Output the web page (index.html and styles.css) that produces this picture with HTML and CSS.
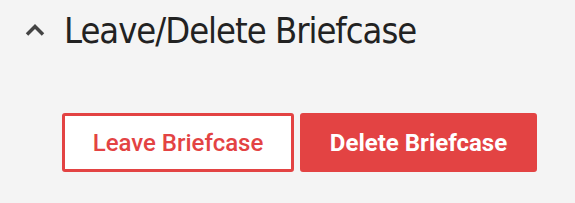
FILE: index.html
```html
<!DOCTYPE html>
<html lang="en">
<head>
    <meta charset="UTF-8">
    <meta name="viewport" content="width=device-width, initial-scale=1.0">
    <title>Leave/Delete Briefcase</title>
    <link rel="stylesheet" href="styles.css">
</head>
<body>
    <div class="section">
        <div class="section-header">
            <svg class="chevron" width="20" height="12" viewBox="0 0 20 12">
                <path d="M2 10.5 L10 2.5 L18 10.5" fill="none" stroke="#444" stroke-width="3.5"/>
            </svg>
            <h2>Leave/Delete Briefcase</h2>
        </div>
        <div class="actions">
            <button class="btn btn-outline">Leave Briefcase</button>
            <button class="btn btn-solid">Delete Briefcase</button>
        </div>
    </div>
</body>
</html>
```

FILE: styles.css
```css
body {
    margin: 0;
    background: #f4f4f4;
    font-family: Roboto, "Liberation Sans", sans-serif;
}
.section { padding: 10px 0 0 25px; }
.section-header {
    display: flex;
    align-items: center;
    gap: 19px;
}
.chevron { display: block; margin-top: -2px; }
h2 {
    margin: 0;
    font-family: "DejaVu Sans Condensed", "DejaVu Sans", sans-serif;
    font-stretch: condensed;
    font-weight: normal;
    font-size: 36px;
    line-height: 42px;
    letter-spacing: -1px;
    color: #222;
}
.actions {
    display: flex;
    gap: 6px;
    margin: 61px 0 0 37px;
}
.btn {
    height: 59px;
    border-radius: 3px;
    font-family: Roboto, sans-serif;
    font-size: 24px;
    cursor: pointer;
}
.btn-outline {
    width: 232px;
    background: #fff;
    border: 3px solid #e34343;
    color: #e34343;
    font-weight: 500;
}
.btn-solid {
    width: 237px;
    background: #e34343;
    border: 3px solid #e34343;
    color: #fff;
    font-weight: bold;
}
```
